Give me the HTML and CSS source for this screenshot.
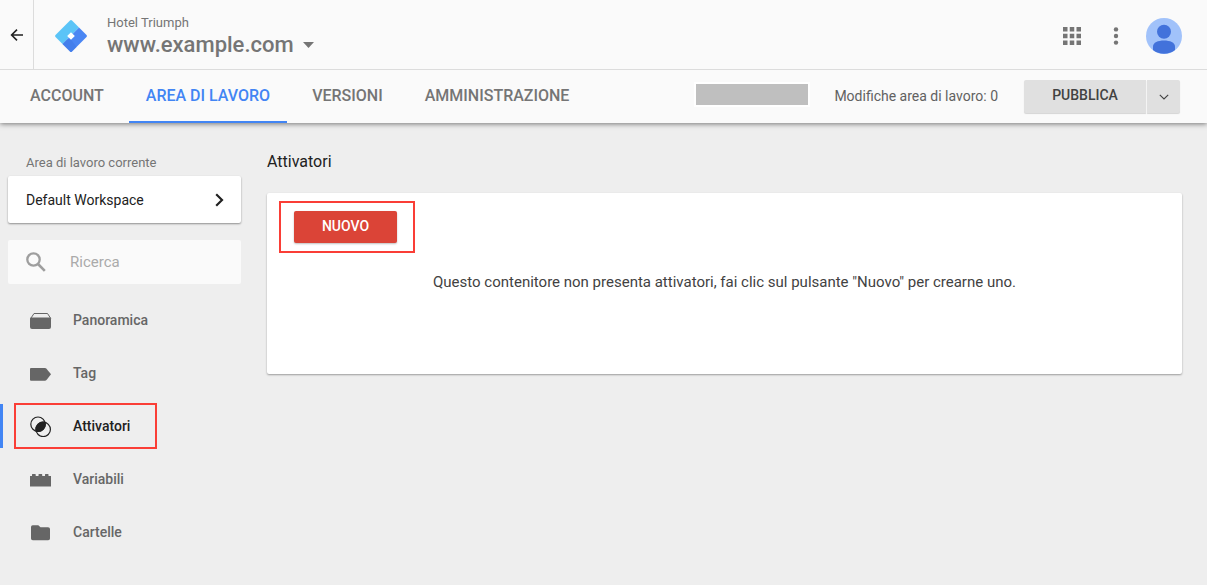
FILE: index.html
```html
<!DOCTYPE html>
<html lang="it">
<head>
    <meta charset="UTF-8">
    <meta name="viewport" content="width=device-width, initial-scale=1.0">
    <title>Attivatori - www.example.com</title>
    <link rel="stylesheet" href="styles.css">
</head>
<body>
    <header class="header">
        <a class="back" href="#" aria-label="Indietro">
            <svg width="14" height="14" viewBox="0 0 14 14" fill="none" stroke="#212121" stroke-width="1.6"><path d="M13 7H2M7 1.6L1.6 7L7 12.4"/></svg>
        </a>
        <svg class="logo" width="34" height="34" viewBox="0 0 34 34">
            <path d="M16 1.5Q17 .5 18 1.5L25 8.5L8.5 25L1.5 18Q.5 17 1.5 16Z" fill="#5bc4f7"/>
            <path d="M25 8.5L32.5 16Q33.5 17 32.5 18L18 32.5Q17 33.5 16 32.5L8.5 25Z" fill="#4a86f3"/>
            <path d="M17 20.5L22.5 28L18 32.5Q17 33.5 16 32.5L8.5 25L13 20.5Z" fill="#3f79e6" opacity=".6"/>
            <path d="M17 13.2L20.8 17L17 20.8L13.2 17Z" fill="#fff"/>
        </svg>
        <div class="container-info">
            <div class="account-name">Hotel Triumph</div>
            <button type="button" class="container-name">www.example.com
                <svg width="11" height="6" viewBox="0 0 11 6"><path d="M0 0H11L5.5 6Z" fill="#757575"/></svg>
            </button>
        </div>
        <div class="header-actions">
            <button type="button" class="icon-button" aria-label="App">
                <svg width="18" height="18" viewBox="0 0 18 18" fill="#757575"><path d="M0 0h4.5v4.5H0zM6.75 0h4.5v4.5h-4.5zM13.5 0H18v4.5h-4.5zM0 6.75h4.5v4.5H0zM6.75 6.75h4.5v4.5h-4.5zM13.5 6.75H18v4.5h-4.5zM0 13.5h4.5V18H0zM6.75 13.5h4.5V18h-4.5zM13.5 13.5H18V18h-4.5z"/></svg>
            </button>
            <button type="button" class="icon-button" aria-label="Altro">
                <svg width="6" height="18" viewBox="0 0 6 18" fill="#757575"><circle cx="3" cy="2.4" r="2.2"/><circle cx="3" cy="9" r="2.2"/><circle cx="3" cy="15.6" r="2.2"/></svg>
            </button>
            <button type="button" class="icon-button" aria-label="Profilo">
                <svg class="avatar" width="36" height="36" viewBox="0 0 36 36"><circle cx="18" cy="18" r="18" fill="#a1c2fa"/><circle cx="18" cy="13.8" r="7" fill="#4272db"/><path d="M7 32V28.5C7 24.5 12 22.5 18 22.5S29 24.5 29 28.5V32A18 18 0 0 1 7 32Z" fill="#4272db"/></svg>
            </button>
        </div>
    </header>

    <div class="toolbar">
        <nav class="tabs">
            <a href="#">ACCOUNT</a>
            <a href="#" class="active">AREA DI LAVORO</a>
            <a href="#">VERSIONI</a>
            <a href="#">AMMINISTRAZIONE</a>
        </nav>
        <div class="placeholder"></div>
        <div class="changes">Modifiche area di lavoro: 0</div>
        <div class="publish">
            <button type="button" class="publish-main">PUBBLICA</button>
            <button type="button" class="publish-more" aria-label="Altre opzioni">
                <svg width="10" height="6" viewBox="0 0 10 6" fill="none" stroke="#424242" stroke-width="1.1"><path d="M.8 .8L5 5L9.2 .8"/></svg>
            </button>
        </div>
    </div>

    <div class="page">
        <aside class="sidebar">
            <div class="workspace-label" id="workspaceLabel">Area di lavoro corrente</div>
            <button type="button" class="workspace" aria-describedby="workspaceLabel">
                Default Workspace
                <svg width="9" height="14" viewBox="0 0 9 14" fill="none" stroke="#212121" stroke-width="2.2"><path d="M1.2 1.2L7 7L1.2 12.8"/></svg>
            </button>
            <div class="search">
                <svg width="20" height="20" viewBox="0 0 20 20" fill="none" stroke="#9e9e9e"><circle cx="7.5" cy="7.5" r="6.2" stroke-width="2.3"/><path d="M12 12L18.8 18.8" stroke-width="2.6"/></svg>
                <input type="text" placeholder="Ricerca" aria-label="Ricerca">
            </div>
            <nav class="menu">
                <a href="#">
                    <svg width="22" height="22" viewBox="0 0 22 22" fill="#666"><path d="M.7 9.5L4 4.5H17.5L20.8 9.5" fill="none" stroke="#666" stroke-width="1"/><path d="M0 9.5Q0 8.5 1 8.5H20Q21 8.5 21 9.5V18Q21 20 19 20H2Q0 20 0 18Z"/></svg>
                    Panoramica
                </a>
                <a href="#">
                    <svg width="22" height="22" viewBox="0 0 22 22" fill="#666"><path d="M0 7Q0 6 1 6H15Q15.8 6 16.5 6.8L21 12.3L16.5 18Q15.8 18.7 15 18.7H1Q0 18.7 0 17.7Z"/></svg>
                    Tag
                </a>
                <a href="#" class="active">
                    <svg width="22" height="22" viewBox="0 0 22 22" fill="none" stroke="#212121" stroke-width="1.2"><circle cx="8" cy="9.2" r="7.2"/><circle cx="13.2" cy="14.4" r="7.2"/><path d="M15 7.4A7.2 7.2 0 0 1 6.2 16.2A7.2 7.2 0 0 1 15 7.4Z" fill="#212121"/></svg>
                    Attivatori
                </a>
                <a href="#">
                    <svg width="22" height="22" viewBox="0 0 22 22" fill="#666"><path d="M0 8H2V6.5Q2 6 2.5 6H5.2Q5.7 6 5.7 6.5V8H8.5V6.5Q8.5 6 9 6H11.7Q12.2 6 12.2 6.5V8H15V6.5Q15 6 15.5 6H18Q18.5 6 18.5 6.5V8H21V18.5H0Z"/></svg>
                    Variabili
                </a>
                <a href="#">
                    <svg width="22" height="22" viewBox="0 0 22 22" fill="#666"><path d="M1 6Q1 4.3 2.7 4.3H8.3L10.5 6.3H18Q20 6.3 20 8V17.5Q20 19.3 18.2 19.3H2.8Q1 19.3 1 17.5Z"/></svg>
                    Cartelle
                </a>
            </nav>
        </aside>
        <main class="content">
            <h1>Attivatori</h1>
            <section class="card">
                <div class="highlight">
                    <button type="button" class="new-button">NUOVO</button>
                </div>
                <p>Questo contenitore non presenta attivatori, fai clic sul pulsante "Nuovo" per crearne uno.</p>
            </section>
        </main>
    </div>
</body>
</html>
```
FILE: styles.css
```css
*, *::after {
    box-sizing: border-box;
}
body {
    margin: 0;
    font-family: Roboto, Arial, sans-serif;
    font-size: 14px;
    color: #212121;
    background: #eee;
}
svg {
    display: block;
    flex-shrink: 0;
}
a {
    color: inherit;
    text-decoration: none;
}
button {
    font: inherit;
    color: inherit;
    border: none;
    background: none;
    padding: 0;
    cursor: pointer;
}

/* Header */
.header {
    position: relative;
    z-index: 1;
    display: flex;
    align-items: center;
    height: 70px;
    padding-right: 25px;
    background: #fafafa;
    border-bottom: 1px solid #dcdcdc;
}
.back {
    display: flex;
    align-items: center;
    align-self: stretch;
    width: 34px;
    padding-left: 10px;
    border-right: 1px solid #dcdcdc;
}
.logo {
    margin: 2px 19px 0 20px;
}
.container-info {
    color: #757575;
    padding-top: 2px;
}
.account-name {
    font-size: 13px;
    line-height: 18px;
}
.container-name {
    display: flex;
    align-items: center;
    gap: 9px;
    font-size: 22px;
    font-weight: 500;
    line-height: 26px;
}
.header-actions {
    display: flex;
    align-items: center;
    gap: 27px;
    margin-left: auto;
    padding-top: 2px;
}
.icon-button:first-child {
    margin-right: 5px;
}

/* Tabs */
.toolbar {
    display: flex;
    align-items: center;
    height: 53px;
    padding: 0 27px 0 13px;
    background: #fafafa;
    box-shadow: 0 1px 5px rgba(0, 0, 0, 0.5);
}
.tabs {
    display: flex;
    align-self: stretch;
    gap: 8px;
    font-size: 16px;
    font-weight: 500;
    color: #757575;
}
.tabs a {
    padding: 0 17px;
    line-height: 52px;
    white-space: nowrap;
}
.tabs .active {
    color: #4285f4;
    border-bottom: 2px solid #4285f4;
}
.placeholder {
    width: 116px;
    height: 25px;
    margin: 0 20px 4px auto;
    border: 2px solid #fff;
    background: #bfbfbf;
}
.changes {
    margin-right: 26px;
    padding-left: 4px;
    padding-bottom: 2px;
    color: #616161;
    white-space: nowrap;
}
.publish {
    display: flex;
    gap: 1px;
    height: 33px;
    font-weight: 500;
    color: #424242;
}
.publish button {
    background: #e0e0e0;
    box-shadow: 0 1px 1px rgba(0, 0, 0, 0.15);
}
.publish .publish-main {
    width: 122px;
    padding-bottom: 3px;
    border-radius: 2px 0 0 2px;
}
.publish .publish-more {
    display: flex;
    align-items: center;
    justify-content: center;
    width: 33px;
    border-radius: 0 2px 2px 0;
}

/* Page */
.page {
    display: flex;
    gap: 26px;
    padding: 28px 25px 24px 0;
}
.sidebar {
    width: 241px;
    flex-shrink: 0;
}
.workspace-label {
    padding: 1px 0 0 26px;
    font-size: 13px;
    line-height: 22px;
    color: #757575;
}
.workspace {
    display: flex;
    align-items: center;
    justify-content: space-between;
    width: 233px;
    height: 47px;
    margin: 2px 0 0 8px;
    padding: 0 17px 0 18px;
    background: #fff;
    border-radius: 2px;
    box-shadow: 0 1px 2px rgba(0, 0, 0, 0.4);
}
.search {
    display: flex;
    align-items: center;
    gap: 24px;
    height: 44px;
    margin: 17px 0 14px 8px;
    padding: 0 18px;
    background: #fafafa;
    border-radius: 2px;
}
.search input {
    flex: 1;
    min-width: 0;
    padding: 0;
    border: none;
    outline: none;
    background: none;
    font: inherit;
    font-size: 15px;
}
.search input::placeholder {
    color: #aaa;
}
.menu {
    display: flex;
    flex-direction: column;
    gap: 9px;
    font-weight: 500;
    color: #666;
}
.menu a {
    position: relative;
    display: flex;
    align-items: center;
    gap: 21px;
    height: 44px;
    padding-left: 30px;
}
.menu .active {
    padding-left: 27px;
    color: #212121;
    border-left: 3px solid #4285f4;
}
/* red frame around the current item */
.menu .active::after {
    content: "";
    position: absolute;
    top: -1px;
    bottom: -1px;
    left: 11px;
    width: 143px;
    border: 2px solid #fa3e36;
}
.content {
    flex: 1;
}
h1 {
    margin: 0 0 20px;
    font-size: 16px;
    font-weight: 400;
    line-height: 22px;
}
.card {
    min-height: 181px;
    padding: 8px 12px 78px;
    background: #fff;
    border-radius: 2px;
    box-shadow: 0 1px 2px rgba(0, 0, 0, 0.35);
}
.highlight {
    width: fit-content;
    padding: 8px 16px 8px 13px;
    border: 2px solid #fa3e36;
}
.new-button {
    display: block;
    width: 103px;
    height: 32px;
    padding-bottom: 2px;
    background: #db4437;
    color: #fff;
    font-weight: 500;
    border-radius: 2px;
    box-shadow: 0 1px 2px rgba(0, 0, 0, 0.25);
}
.card p {
    margin: 18px 0 0;
    font-size: 15px;
    line-height: 22px;
    text-align: center;
    color: #424242;
}
```
